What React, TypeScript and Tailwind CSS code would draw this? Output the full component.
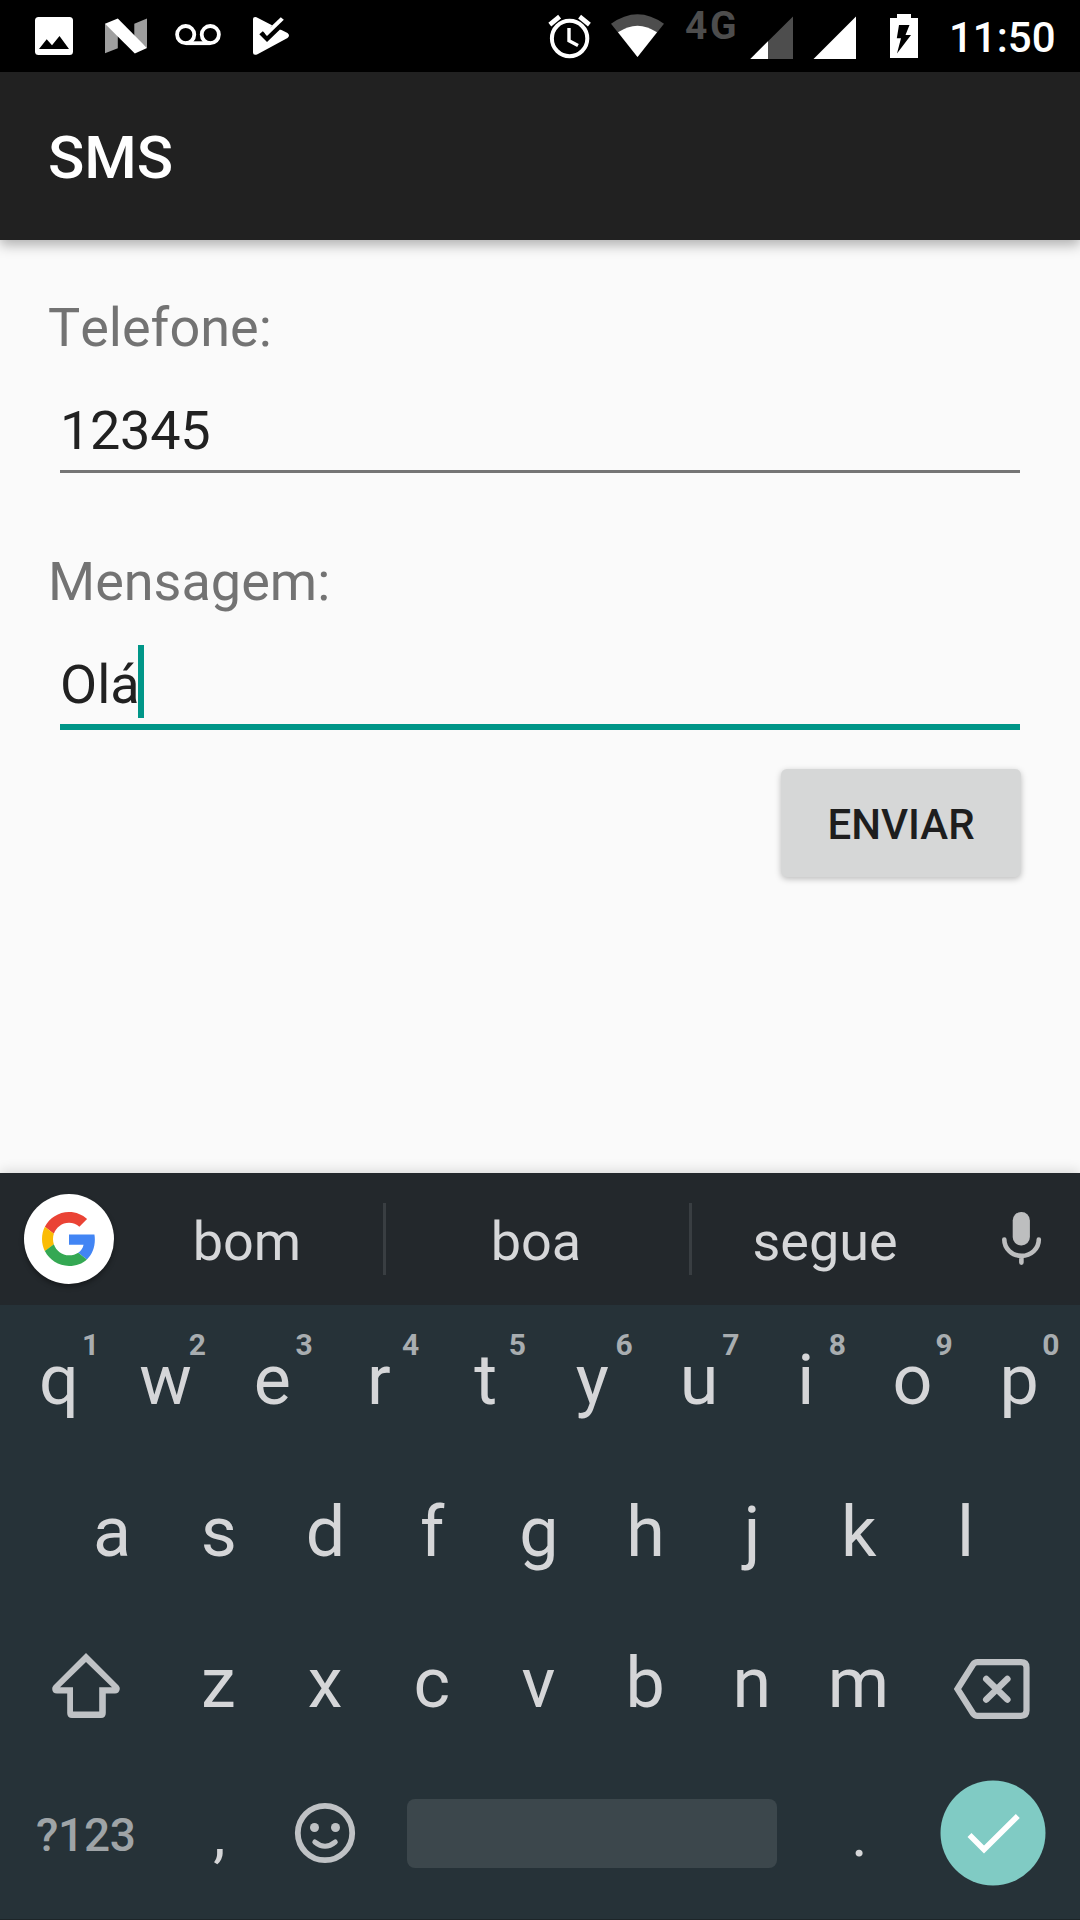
import type { ReactNode } from "react";

function StatusIcon({ x, w, children }: { x: number; w: number; children: ReactNode }) {
  return (
    <svg width={w} height={72} viewBox={`${x} 0 ${w} 72`} fill="#fff" className="block shrink-0 overflow-visible">
      {children}
    </svg>
  );
}

function StatusBar() {
  return (
    <header className="flex h-[72px] justify-between bg-black pl-[35px] pr-[25px]">
      <div className="flex">
        <StatusIcon x={35} w={38}>
          <rect x="35" y="17" width="38" height="38" rx="3.5" />
          <path d="M39 49L46.7 39.3L52 45.3L59.5 36L69 49Z" fill="#000" />
        </StatusIcon>
        <div className="ml-8">
          <StatusIcon x={105} w={42}>
            <path d="M105 23.5V53.3L117.8 48.3V34L105 23.5ZM147 18.5V48L134.3 37V23.8Z" fill="#9e9e9e" />
            <path d="M105 23.7L117.8 18.4L147 48L134.8 53.4Z" />
          </StatusIcon>
        </div>
        <div className="ml-7">
          <StatusIcon x={175} w={46}>
            <g fill="none" stroke="#fff" strokeWidth="3.8">
              <circle cx="185.7" cy="34.6" r="8.6" />
              <circle cx="210.3" cy="34.6" r="8.6" />
              <path d="M185.7 43.2H210.3" />
            </g>
          </StatusIcon>
        </div>
        <div className="ml-8">
          <StatusIcon x={253} w={36}>
            <path d="M253 19Q253 16.5 256.5 17.2L272 25.3L287.5 33Q290.5 35.5 287.5 38L257.5 54.3Q253 56 253 52.5Z" />
            <path d="M271 26.5L280 17.5L292 29L280 29.5L267 42L259.3 34.3L262.8 31.3L267 35.2Z" fill="#000" />
            <path d="M264.5 32.8L280.8 17.2L283.8 19.8L267 36L266 35Z" />
          </StatusIcon>
        </div>
      </div>
      <div className="flex">
        <StatusIcon x={549} w={42}>
          <g fill="none" stroke="#fff" strokeWidth="4">
            <circle cx="569.6" cy="38.5" r="17.7" />
            <path d="M549.8 24.6L559.6 16.6M579.6 16.6L589.4 24.6" strokeWidth="4.6" />
            <path d="M569 28V40.8L578 45.6" strokeWidth="3.4" />
          </g>
        </StatusIcon>
        <div className="ml-5">
          <StatusIcon x={611} w={53}>
            <path d="M637.5 57L611 23.8Q637.5 4.6 664 23.8Z" fill="#4d4d4d" />
            <path d="M637.5 57L618 32.3Q637.5 19 657 32.3Z" />
          </StatusIcon>
        </div>
        <span className="ml-[21px] w-[65px] text-[39px] font-bold leading-[52px] tracking-[2.5px] text-[#4d4d4d]">4G</span>
        <StatusIcon x={750} w={43}>
          <path d="M750.3 59L793 16.5V59Z" fill="#4d4d4d" />
          <path d="M750.3 59L768 41.2V59Z" />
        </StatusIcon>
        <div className="ml-5">
          <StatusIcon x={813} w={43}>
            <path d="M813.5 59L856 16.5V59Z" />
          </StatusIcon>
        </div>
        <div className="ml-[34px]">
          <StatusIcon x={890} w={28}>
            <path d="M890 18H897V14H911V18H918V58H890Z" />
            <path d="M899 25H909.5L905.5 35H911L897 53.5L901 38.3H896.8Z" fill="#000" />
          </StatusIcon>
        </div>
        <span className="ml-[31px] w-[106px] whitespace-nowrap text-right text-[42px] font-medium leading-[76px] text-white">11:50</span>
      </div>
    </header>
  );
}

function GoogleLogo() {
  return (
    <svg width="54" height="54" viewBox="0 0 48 48">
      <path fill="#ea4335" d="M24 9.5c3.54 0 6.71 1.22 9.21 3.6l6.85-6.85C35.9 2.38 30.47 0 24 0 14.62 0 6.51 5.38 2.56 13.22l7.98 6.19C12.43 13.72 17.74 9.5 24 9.5z" />
      <path fill="#4285f4" d="M46.98 24.55c0-1.57-.15-3.09-.38-4.55H24v9.02h12.94c-.58 2.96-2.26 5.48-4.78 7.18l7.73 6c4.51-4.18 7.09-10.36 7.09-17.65z" />
      <path fill="#fbbc05" d="M10.53 28.59c-.48-1.45-.76-2.99-.76-4.59s.27-3.14.76-4.59l-7.98-6.19C.92 16.46 0 20.12 0 24c0 3.88.92 7.54 2.56 10.78l7.97-6.19z" />
      <path fill="#34a853" d="M24 48c6.48 0 11.93-2.13 15.89-5.81l-7.73-6c-2.15 1.45-4.92 2.3-8.16 2.3-6.26 0-11.57-4.22-13.47-9.91l-7.98 6.19C6.51 42.62 14.62 48 24 48z" />
    </svg>
  );
}

function Suggestions() {
  return (
    <div className="flex h-[132px] items-center bg-[#23282c] pl-6 text-[54px] text-[#d6d7d9]">
      <div className="flex size-[90px] items-center justify-center rounded-full bg-white shadow-[0_3px_5px_rgba(0,0,0,0.35)]">
        <GoogleLogo />
      </div>
      <span className="w-[269px] pr-[3px] pt-[6px] text-center leading-[132px]">bom</span>
      <span className="h-[72px] w-[3px] bg-[#393e42]" />
      <span className="w-[303px] pr-[3px] pt-[6px] text-center leading-[132px]">boa</span>
      <span className="h-[72px] w-[3px] bg-[#393e42]" />
      <span className="w-[266px] pt-[6px] text-center leading-[132px]">segue</span>
      <svg width="40" height="132" viewBox="1002 1173 40 132" className="ml-[44px]">
        <rect x="1012.7" y="1212" width="17.2" height="33.5" rx="8.4" fill="#bdbebf" />
        <path d="M1004.3 1239.5A17.2 16.3 0 0 0 1038.8 1239.5M1021.4 1256V1262.6" fill="none" stroke="#bdbebf" strokeWidth="4.6" strokeLinecap="round" />
      </svg>
    </div>
  );
}

function Key({ label, hint }: { label: string; hint?: string }) {
  return (
    <span className="relative w-[106.7px] shrink-0 text-center">
      {label}
      {hint && (
        <sup className="absolute left-[76.5px] top-[25px] w-[20px] whitespace-nowrap text-left text-[30px] font-bold leading-[30px] text-[#a8adb0]">{hint}</sup>
      )}
    </span>
  );
}

function Keyboard() {
  return (
    <div className="flex h-[615px] flex-col border-b border-[#1d2528] bg-[#263238] text-[70px] leading-[150px] text-[#d5d6d8]">
      <div className="flex h-[151px] pl-[5.5px]">
        {"qwertyuiop".split("").map((k, i) => (
          <Key key={k} label={k} hint={String((i + 1) % 10)} />
        ))}
      </div>
      <div className="flex h-[152px] pl-[58.7px] leading-[152px]">
        {"asdfghjkl".split("").map((k) => (
          <Key key={k} label={k} />
        ))}
      </div>
      <div className="flex h-[152px]">
        <svg width="165" height="152" viewBox="0 1608 165 152" className="shrink-0">
          <path
            fill="#bfc2c5"
            fillRule="evenodd"
            d="M86 1653L118.5 1685.5Q120 1687 119.8 1689Q119 1693.5 115 1693.5H105.8V1713Q105.8 1718 101 1718H72Q67.2 1718 67.2 1713V1693.5H57Q52.5 1693.5 52.2 1689Q52 1687 53.5 1685.5ZM86 1662L60 1687.3H73V1711.5H99.2V1687.3H112Z"
          />
        </svg>
        {"zxcvbnm".split("").map((k) => (
          <Key key={k} label={k} />
        ))}
        <svg width="166" height="152" viewBox="914 1608 166 152" className="ml-auto shrink-0" fill="none" stroke="#bfc2c5" strokeWidth="6.2">
          <path d="M957.5 1689L973 1664.5Q974.6 1662.2 977.5 1662.2H1021Q1026.5 1662.2 1026.5 1667.5V1710.5Q1026.5 1715.8 1021 1715.8H977.5Q974.6 1715.8 973 1713.5Z" />
          <path d="M986.3 1679L1007.3 1699.5M1007.3 1679L986.3 1699.5" strokeWidth="6.6" strokeLinecap="round" />
        </svg>
      </div>
      <div className="flex h-[146px] items-center leading-[146px]">
        <span className="w-[165px] pl-[36px] pt-[3px] text-[46px] font-medium tracking-[-0.3px] text-[#9fa4a7]">?123</span>
        <span className="flex w-[107px] pl-px pt-[4px] text-[62px]">
          <Key label="," />
        </span>
        <svg width="107" height="146" viewBox="272 1760 107 146" fill="none" stroke="#bfc2c5">
          <circle cx="325" cy="1833" r="27.2" strokeWidth="5.8" />
          <circle cx="314.5" cy="1827.5" r="4.5" fill="#bfc2c5" stroke="none" />
          <circle cx="335.5" cy="1827.5" r="4.5" fill="#bfc2c5" stroke="none" />
          <path d="M314.8 1842Q325 1850.5 335.3 1842" strokeWidth="5" strokeLinecap="round" />
        </svg>
        <span className="ml-[28px] h-[69px] w-[370px] rounded-lg bg-[#3c474c]" />
        <span className="ml-[29px] flex pt-[4px] text-[62px]">
          <Key label="." />
        </span>
        <svg width="106" height="146" viewBox="940 1760 106 146" className="ml-auto mr-[34px]">
          <circle cx="993" cy="1833" r="52.5" fill="#80cbc4" />
          <path d="M969.5 1835L984 1849.5L1017.8 1816" fill="none" stroke="#fff" strokeWidth="5.6" />
        </svg>
      </div>
    </div>
  );
}

export default function App() {
  return (
    <div className="flex h-[1920px] w-[1080px] flex-col overflow-hidden bg-[#fafafa] font-['Roboto',sans-serif]">
      <StatusBar />
      <div className="z-10 h-[168px] bg-[#212121] pl-[48px] text-[60px] font-medium leading-[172px] text-white shadow-[0_5px_12px_rgba(0,0,0,0.3)]">SMS</div>
      <main className="flex flex-1 flex-col px-[48px] pt-[56px] text-[54px] leading-[64px] text-[#737373]">
        <label className="[font-kerning:none]">Telefone:</label>
        <div className="mx-3 mt-[39px] h-[74px] border-b-[3px] border-[#757575] tracking-[-0.3px] text-[#212121]">12345</div>
        <label className="mt-[77px]">Mensagem:</label>
        <div className="mx-3 mt-[31px] flex h-[85px] border-b-[6px] border-[#009688] text-[#212121]">
          <span className="w-[78px] pt-[8px]">Olá</span>
          <span className="h-[73px] w-[6px] bg-[#009688]" />
        </div>
        <button className="ml-auto mr-[11.5px] mt-[39px] h-[108px] w-[240px] rounded-md bg-[#d6d7d7] pl-px pt-[3px] text-[42px] font-medium text-[#1e1e1e] shadow-[0_2px_6px_rgba(0,0,0,0.25)]">ENVIAR</button>
      </main>
      <div className="z-10 shadow-[0_-2px_12px_rgba(0,0,0,0.14)]">
        <Suggestions />
        <Keyboard />
      </div>
    </div>
  );
}
